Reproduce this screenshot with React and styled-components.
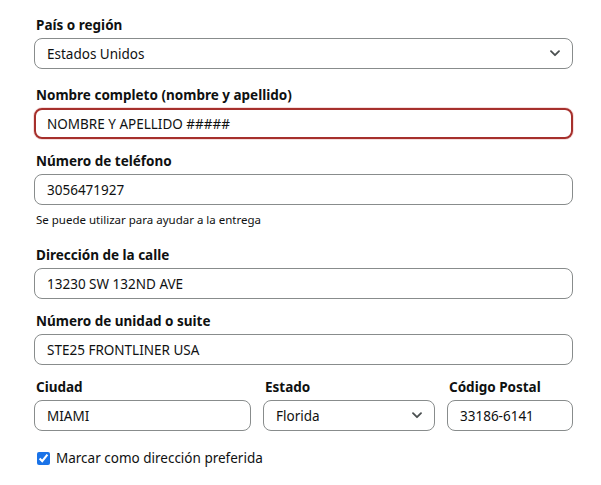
import React from "react";
import styled, {createGlobalStyle} from "styled-components";

const GlobalStyle = createGlobalStyle`
    body {
        margin: 0;
        background: #ffffff;
        font-family: "Noto Sans", "Liberation Sans", Arial, sans-serif;
        color: #0f1111;
    }
`;

const Form = styled.form`
    width: 539px;
    padding: 15px 28px 20px 34px;
    display: flex;
    flex-direction: column;
`;

const Group = styled.div`
    display: flex;
    flex-direction: column;
    margin-bottom: ${props => props.gap ?? 12}px;
    min-width: 0;
`;

const Label = styled.label`
    font-size: 13.5px;
    font-weight: 700;
    line-height: 20px;
    margin: 0 0 3px 2px;
`;

const Field = styled.div`
    height: 31px;
    box-sizing: border-box;
    border: ${props => props.error ? '2px solid #a6302c' : '1px solid #888c8c'};
    border-radius: 8px;
    box-shadow: ${props => props.error ? '0 0 0 1px #f6dede' : 'none'};
    display: flex;
    align-items: center;
    justify-content: space-between;
    padding: 0 ${props => props.error ? 11 : 12}px;
    font-size: 13.5px;
    background: #fff;
`;

const Chevron = () => (
    <svg width="10" height="7" viewBox="0 0 10 7">
        <path d="M1 1.2 L5 5.2 L9 1.2" fill="none" stroke="#4a4f50" strokeWidth="1.8"
              strokeLinecap="round" strokeLinejoin="round"/>
    </svg>
);

const Hint = styled.div`
    font-size: 11.5px;
    line-height: 16px;
    margin: 7px 0 17px 2px;
`;

const Row = styled.div`
    display: grid;
    grid-template-columns: 217px 172px 126px;
    column-gap: 12px;
`;

const CheckRow = styled.label`
    display: flex;
    align-items: center;
    gap: 6px;
    margin-top: 18px;
    font-size: 13.5px;
    line-height: 19px;
`;

const Check = styled.input`
    width: 13px;
    height: 13px;
    margin: 0 0 0 3px;
    accent-color: #1a73e8;
`;

function TextField({label, value, error, select, gap}) {
    return (
        <Group gap={gap}>
            <Label>{label}</Label>
            <Field error={error}>
                <span>{value}</span>
                {select && <Chevron/>}
            </Field>
        </Group>
    );
}

export default function App() {
    return (
        <>
            <GlobalStyle/>
            <Form>
                <TextField label="País o región" value="Estados Unidos" select gap={16}/>
                <TextField label="Nombre completo (nombre y apellido)" value="NOMBRE Y APELLIDO #####" error/>
                <Group gap={0}>
                    <Label>Número de teléfono</Label>
                    <Field><span>3056471927</span></Field>
                </Group>
                <Hint>Se puede utilizar para ayudar a la entrega</Hint>
                <TextField label="Dirección de la calle" value="13230 SW 132ND AVE"/>
                <TextField label="Número de unidad o suite" value="STE25 FRONTLINER USA"/>
                <Row>
                    <TextField label="Ciudad" value="MIAMI" gap={0}/>
                    <TextField label="Estado" value="Florida" select gap={0}/>
                    <TextField label="Código Postal" value="33186-6141" gap={0}/>
                </Row>
                <CheckRow>
                    <Check type="checkbox" defaultChecked/>
                    Marcar como dirección preferida
                </CheckRow>
            </Form>
        </>
    );
}
